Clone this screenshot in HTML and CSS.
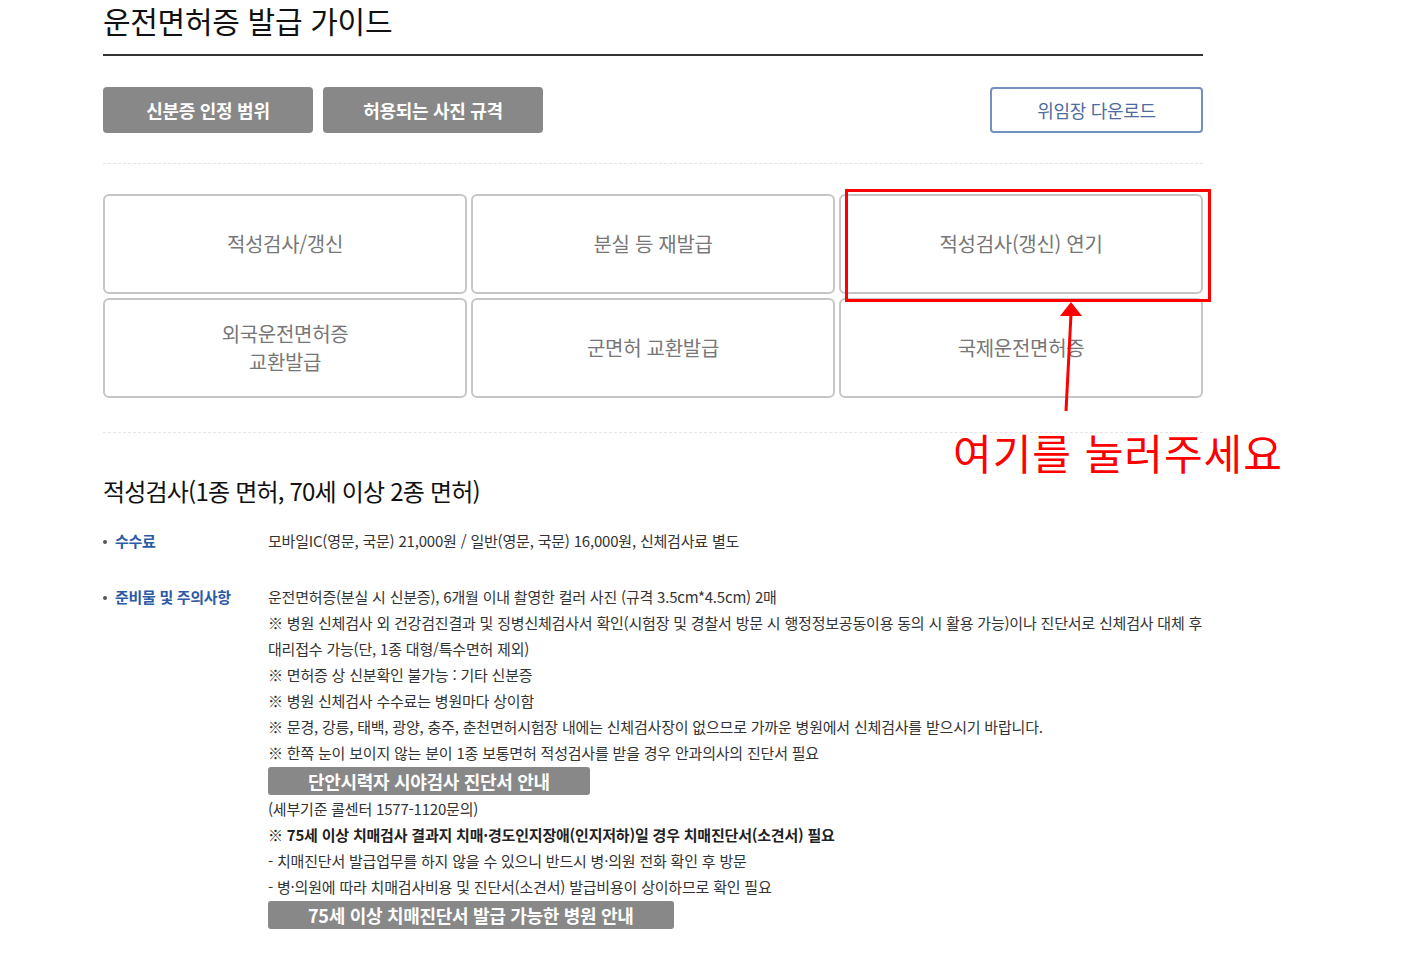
FILE: index.html
```html
<!DOCTYPE html>
<html lang="ko">
<head>
    <meta charset="UTF-8">
    <meta name="viewport" content="width=device-width, initial-scale=1.0">
    <title>운전면허증 발급 가이드</title>
    <link rel="stylesheet" href="styles.css">
</head>
<body>
    <div class="wrap">
        <h1 class="page-title">운전면허증 발급 가이드</h1>

        <div class="top-actions">
            <div class="tab-btns">
                <a class="btn-gray btn-id">신분증 인정 범위</a>
                <a class="btn-gray btn-photo">허용되는 사진 규격</a>
            </div>
            <a class="btn-line">위임장 다운로드</a>
        </div>

        <div class="menu-area">
            <ul class="menu-grid">
                <li><a>적성검사/갱신</a></li>
                <li><a>분실 등 재발급</a></li>
                <li><a>적성검사(갱신) 연기</a></li>
                <li><a>외국운전면허증<br>교환발급</a></li>
                <li><a>군면허 교환발급</a></li>
                <li><a>국제운전면허증</a></li>
            </ul>
        </div>

        <h2 class="sec-title">적성검사(1종 면허, 70세 이상 2종 면허)</h2>

        <div class="info-row first">
            <div class="info-label">수수료</div>
            <div class="info-value">모바일IC(영문, 국문) 21,000원 / 일반(영문, 국문) 16,000원, 신체검사료 별도</div>
        </div>

        <div class="info-row">
            <div class="info-label">준비물 및 주의사항</div>
            <div class="info-value">
                <p>운전면허증(분실 시 신분증), 6개월 이내 촬영한 컬러 사진 (규격 3.5cm*4.5cm) 2매</p>
                <p>※ 병원 신체검사 외 건강검진결과 및 징병신체검사서 확인(시험장 및 경찰서 방문 시 행정정보공동이용 동의 시 활용 가능)이나 진단서로 신체검사 대체 후<br>대리접수 가능(단, 1종 대형/특수면허 제외)</p>
                <p>※ 면허증 상 신분확인 불가능 : 기타 신분증</p>
                <p>※ 병원 신체검사 수수료는 병원마다 상이함</p>
                <p>※ 문경, 강릉, 태백, 광양, 충주, 춘천면허시험장 내에는 신체검사장이 없으므로 가까운 병원에서 신체검사를 받으시기 바랍니다.</p>
                <p>※ 한쪽 눈이 보이지 않는 분이 1종 보통면허 적성검사를 받을 경우 안과의사의 진단서 필요</p>
                <a class="btn-guide">단안시력자 시야검사 진단서 안내</a>
                <p>(세부기준 콜센터 1577-1120문의)</p>
                <p class="strong">※ 75세 이상 치매검사 결과지 치매·경도인지장애(인지저하)일 경우 치매진단서(소견서) 필요</p>
                <p>- 치매진단서 발급업무를 하지 않을 수 있으니 반드시 병·의원 전화 확인 후 방문</p>
                <p>- 병·의원에 따라 치매검사비용 및 진단서(소견서) 발급비용이 상이하므로 확인 필요</p>
                <a class="btn-guide">75세 이상 치매진단서 발급 가능한 병원 안내</a>
            </div>
        </div>

        <!-- 캡처 위 안내 표시 -->
        <div class="mark-box"></div>
        <svg class="mark-arrow" width="40" height="120" viewBox="0 0 40 120">
            <line x1="15" y1="111" x2="20" y2="14" stroke="#ff0000" stroke-width="3"/>
            <polygon points="20,2 9,16 31,16" fill="#ff0000"/>
        </svg>
        <div class="mark-text">여기를 눌러주세요</div>
    </div>
</body>
</html>
```

FILE: styles.css
```css
* {
    box-sizing: border-box;
}

body {
    margin: 0;
    background-color: #fff;
    color: #333;
    font-family: "Noto Sans CJK KR", "Noto Sans", sans-serif;
}

a {
    text-decoration: none;
    cursor: pointer;
}

.wrap {
    position: relative;
    width: 1100px;
    margin-left: 103px;
    padding-bottom: 30px;
}

.page-title {
    margin: 0;
    padding-bottom: 14px;
    font-size: 30px;
    line-height: 40px;
    font-weight: normal;
    color: #111;
    letter-spacing: -0.3px;
    border-bottom: 2px solid #333;
}

.top-actions {
    display: flex;
    justify-content: space-between;
    margin-top: 31px;
    padding-bottom: 30px;
    border-bottom: 1px dashed #e4e4e4;
}

.tab-btns {
    display: flex;
    gap: 10px;
}

.btn-gray {
    display: flex;
    justify-content: center;
    align-items: center;
    height: 46px;
    border-radius: 4px;
    background-color: #888;
    color: #fff;
    font-size: 18px;
    font-weight: bold;
    letter-spacing: -0.3px;
}

.btn-id {
    width: 210px;
}

.btn-photo {
    width: 220px;
}

.btn-line {
    display: flex;
    justify-content: center;
    align-items: center;
    width: 213px;
    height: 46px;
    border: 2px solid #7391c0;
    border-radius: 4px;
    color: #4d6c9e;
    font-size: 18px;
    letter-spacing: -0.3px;
}

.menu-area {
    padding: 30px 0 34px;
    border-bottom: 1px dashed #e4e4e4;
}

.menu-grid {
    display: grid;
    grid-template-columns: repeat(3, 1fr);
    gap: 4px;
    margin: 0;
    padding: 0;
    list-style: none;
}

.menu-grid a {
    display: flex;
    justify-content: center;
    align-items: center;
    height: 100px;
    border: 2px solid #c6c6c6;
    border-radius: 6px;
    color: #777;
    font-size: 20px;
    line-height: 28px;
    letter-spacing: -0.3px;
    text-align: center;
}

.sec-title {
    margin: 41px 0 0;
    font-size: 24px;
    line-height: 34px;
    font-weight: normal;
    color: #111;
    letter-spacing: -0.8px;
}

.info-row {
    display: grid;
    grid-template-columns: 165px 1fr;
    margin-top: 30px;
    font-size: 15px;
    line-height: 26px;
}

.info-row.first {
    margin-top: 20px;
}

.info-label {
    position: relative;
    padding-left: 12px;
    color: #2b5aa6;
    font-weight: bold;
    letter-spacing: -0.3px;
}

.info-label::before {
    content: "";
    position: absolute;
    left: 0;
    top: 12px;
    width: 4px;
    height: 4px;
    border-radius: 50%;
    background-color: #555;
}

.info-value {
    color: #333;
    white-space: nowrap;
    letter-spacing: -0.2px;
}

.info-value p {
    margin: 0;
}

.info-value .strong {
    font-weight: bold;
    color: #222;
}

.btn-guide {
    display: inline-block;
    height: 28px;
    margin: 1px 0;
    padding: 0 40px;
    border-radius: 3px;
    background-color: #888;
    color: #fff;
    font-size: 18px;
    line-height: 28px;
    font-weight: bold;
    letter-spacing: -0.3px;
}

.mark-box {
    position: absolute;
    left: 742px;
    top: 189px;
    width: 366px;
    height: 113px;
    border: 3px solid #ff0000;
}

.mark-arrow {
    position: absolute;
    left: 948px;
    top: 300px;
}

.mark-text {
    position: absolute;
    left: 850px;
    top: 424px;
    color: #ff0000;
    font-size: 42px;
    line-height: 56px;
    letter-spacing: 1px;
    white-space: nowrap;
}
```
